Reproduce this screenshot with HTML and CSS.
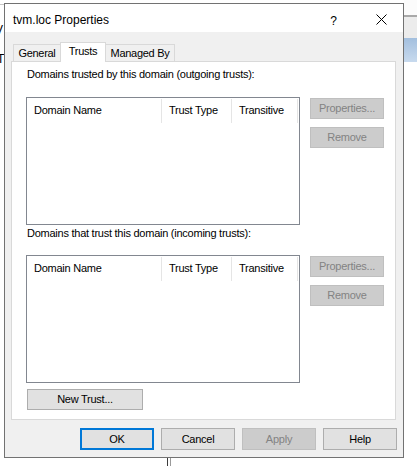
FILE: index.html
```html
<!DOCTYPE html>
<html>
<head>
<meta charset="utf-8">
<link rel="stylesheet" href="styles.css">
</head>
<body>
<div class="desktop">
  <div class="bg-left">
    <div class="bg-left-line"></div>
    <span class="bg-glyph g1">V</span>
    <span class="bg-glyph g2">T</span>
  </div>
  <div class="bg-right">
    <div class="bg-r-white"></div>
    <div class="bg-r-line"></div>
    <div class="bg-r-gray"></div>
    <div class="bg-r-blue"></div>
  </div>
  <div class="bg-bottom"><span class="bb1"></span><span class="bb2"></span></div>

  <div class="window">
    <div class="titlebar">
      <span class="title">tvm.loc Properties</span>
      <span class="help">?</span>
      <svg class="close" width="11" height="11" viewBox="0 0 11 11"><path d="M0.5 0.5 L10.5 10.5 M10.5 0.5 L0.5 10.5" stroke="#000" stroke-width="1" fill="none"/></svg>
    </div>
    <div class="client">
      <div class="tabs">
        <div class="tab t-general">General</div>
        <div class="tab t-trusts active">Trusts</div>
        <div class="tab t-managed">Managed By</div>
      </div>
      <div class="panel">
        <div class="label">Domains trusted by this domain (outgoing trusts):</div>
        <div class="row">
          <div class="list">
            <div class="list-head">
              <div class="col c1">Domain Name</div>
              <div class="col c2">Trust Type</div>
              <div class="col c3">Transitive</div>
              <div class="col c4"></div>
            </div>
          </div>
          <div class="side">
            <div class="btn disabled">Properties...</div>
            <div class="btn disabled">Remove</div>
          </div>
        </div>
        <div class="label label2">Domains that trust this domain (incoming trusts):</div>
        <div class="row row2">
          <div class="list">
            <div class="list-head">
              <div class="col c1">Domain Name</div>
              <div class="col c2">Trust Type</div>
              <div class="col c3">Transitive</div>
              <div class="col c4"></div>
            </div>
          </div>
          <div class="side">
            <div class="btn disabled">Properties...</div>
            <div class="btn disabled">Remove</div>
          </div>
        </div>
        <div class="btn newtrust">New Trust...</div>
      </div>
      <div class="footer">
        <div class="btn fbtn default">OK</div>
        <div class="btn fbtn">Cancel</div>
        <div class="btn fbtn disabled">Apply</div>
        <div class="btn fbtn">Help</div>
      </div>
    </div>
  </div>
</div>
</body>
</html>
```

FILE: styles.css
```css
* { box-sizing: border-box; }
html, body {
  margin: 0;
  padding: 0;
  background: #ffffff;
  width: 417px;
  height: 466px;
  overflow: hidden;
  font-family: "Liberation Sans", Arial, sans-serif;
  font-size: 11px;
  color: #000;
}
.desktop {
  position: relative;
  width: 417px;
  height: 466px;
}

/* background artifacts (other windows on the desktop) */
.bg-left {
  position: absolute;
  left: 0;
  top: 0;
  width: 4px;
  height: 80px;
  overflow: hidden;
}
.bg-left-line {
  position: absolute;
  left: 0; top: 4px;
  width: 4px; height: 1px;
  background: #c8c8c8;
}
.bg-glyph {
  position: absolute;
  font-size: 12px;
  line-height: 12px;
  color: #000;
}
.g1 { left: -5px; top: 24px; }
.g2 { left: -3px; top: 53px; }

.bg-right {
  position: absolute;
  left: 404px;
  top: 0;
  width: 13px;
  display: flex;
  flex-direction: column;
}
.bg-r-white { height: 15px; background: #fbfbfb; }
.bg-r-line { height: 2px; background: #a9a9a9; }
.bg-r-gray { height: 21px; background: #ececec; }
.bg-r-blue { height: 24px; background: linear-gradient(#a3bfde, #c8daee); }

.bg-bottom {
  position: absolute;
  left: 167px;
  top: 458px;
  height: 8px;
  display: flex;
  gap: 2px;
}
.bb1 { width: 1px; height: 8px; background: #3c3c3c; }
.bb2 { width: 1px; height: 8px; background: #9a9a9a; }

/* window */
.window {
  position: absolute;
  left: 4px;
  top: 3px;
  width: 400px;
  height: 455px;
  border: 1px solid #727272;
  background: #f0f0f0;
  display: flex;
  flex-direction: column;
}
.titlebar {
  height: 28px;
  background: #ffffff;
  display: flex;
  align-items: flex-start;
  padding-left: 8px;
  padding-top: 9px;
}
.title {
  font-size: 12px;
  line-height: 14px;
}
.help {
  margin-left: auto;
  font-size: 12px;
  line-height: 14px;
  margin-right: 39px;
  margin-top: 1px;
}
.close {
  margin-top: 1px;
  margin-right: 16px;
}

.client {
  flex: 1;
  display: flex;
  flex-direction: column;
  padding-top: 10px;
  letter-spacing: -0.25px;
}
.tabs {
  height: 19px;
  display: flex;
  align-items: flex-end;
  padding-left: 8px;
  position: relative;
  z-index: 2;
}
.tab {
  height: 17px;
  border: 1px solid #d9d9d9;
  border-bottom: none;
  background: #f0f0f0;
  text-align: center;
  line-height: 16px;
  letter-spacing: -0.3px;
}
.t-general { width: 48px; }
.t-trusts { width: 46px; margin-left: -1px; }
.t-managed { width: 70px; margin-left: -1px; }
.tab.active {
  height: 20px;
  background: #ffffff;
  margin-bottom: -1px;
  line-height: 16px;
  position: relative;
  z-index: 3;
}

.panel {
  height: 359px;
  margin: 0 7px 0 6px;
  border: 1px solid #d9d9d9;
  background: #ffffff;
  padding: 6px 0 0 14px;
  display: flex;
  flex-direction: column;
  align-items: flex-start;
}
.label {
  line-height: 13px;
  margin-left: 1px;
}
.label2 { margin-top: 2px; }
.row {
  display: flex;
  gap: 10px;
  margin-top: 16px;
  align-items: flex-start;
}
.row2 { margin-top: 15px; }
.list {
  width: 274px;
  height: 128px;
  border: 1px solid #828790;
  background: #ffffff;
}
.list-head {
  display: flex;
  height: 25px;
}
.col {
  line-height: 25px;
  padding-left: 7px;
  position: relative;
}
.col::after {
  content: "";
  position: absolute;
  right: 0;
  top: 1px;
  width: 1px;
  height: 24px;
  background: #e5e5e5;
}
.c1 { width: 135px; }
.c2 { width: 70px; }
.c3 { width: 66px; }
.c4 { width: 1px; padding: 0; }
.c4::after { display: none; }

.side {
  display: flex;
  flex-direction: column;
  gap: 8px;
  padding-top: 1px;
}
.btn {
  width: 74px;
  height: 21px;
  border: 1px solid #adadad;
  background: #e1e1e1;
  text-align: center;
  line-height: 19px;
  color: #000;
}
.btn.disabled {
  background: #cccccc;
  border-color: #bfbfbf;
  color: #838383;
}
.newtrust {
  width: 116px;
  margin-top: 6px;
  margin-left: 1px;
}
.footer {
  display: flex;
  justify-content: flex-end;
  gap: 7px;
  padding: 8px 6px 0 0;
}
.fbtn {
  height: 22px;
  line-height: 20px;
}
.fbtn.default {
  border: 2px solid #0078d7;
  line-height: 18px;
}
```
